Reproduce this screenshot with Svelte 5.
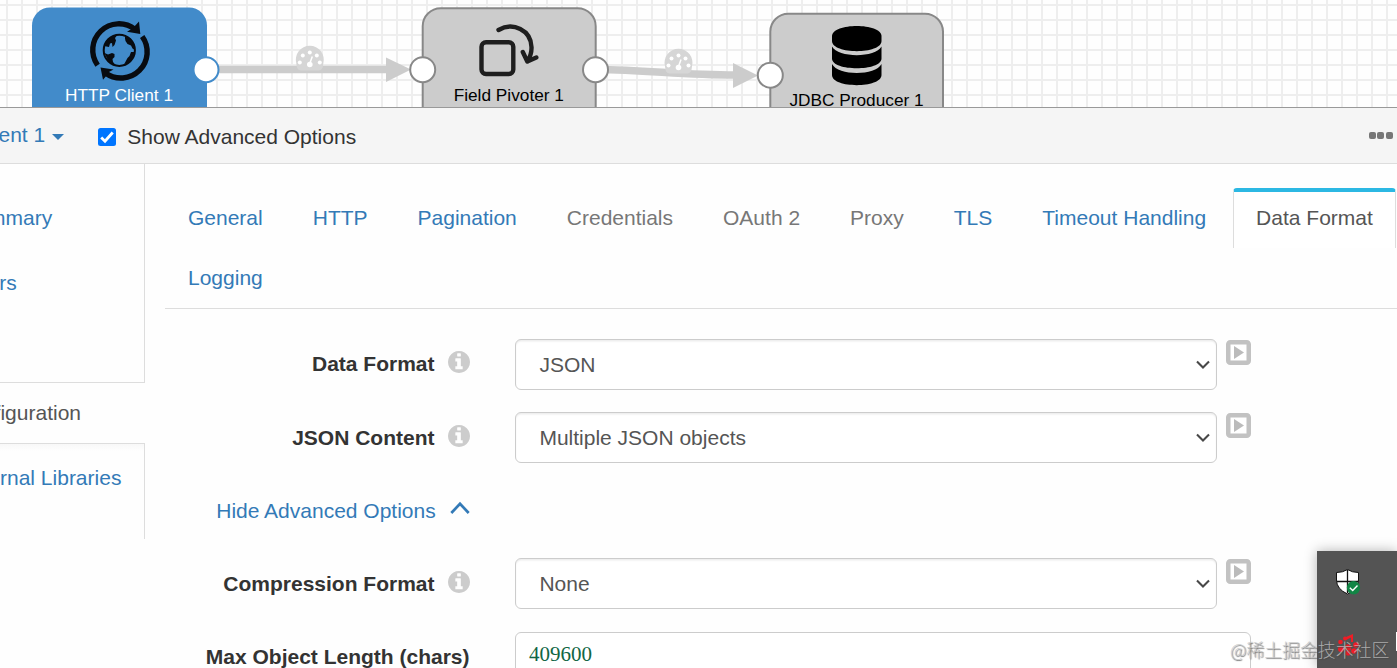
<script>
  const tabs = [
    { name: 'General' },
    { name: 'HTTP' },
    { name: 'Pagination' },
    { name: 'Credentials', off: true },
    { name: 'OAuth 2', off: true },
    { name: 'Proxy', off: true },
    { name: 'TLS' },
    { name: 'Timeout Handling' },
    { name: 'Data Format', active: true },
    { name: 'Logging' }
  ];
</script>

{#snippet gauge()}
  <path d="M-13.5 2 A14 14 0 1 1 13.5 2 Q13 9 9 9 H-9 Q-13 9 -13.5 2Z" fill="#d6d6d6" />
  <g fill="#fff">
    <circle cx="-10" cy="1" r="2" /><circle cx="-7" cy="-6" r="2" /><circle cx="0" cy="-9" r="2" />
    <circle cx="7" cy="-6" r="2" /><circle cx="10" cy="1" r="2" /><circle cx="0" cy="3" r="2.8" />
  </g>
  <path d="M0 2 L2.5 -5" stroke="#fff" stroke-width="1.5" />
{/snippet}

{#snippet field(label, value)}
  <div class="row">
    <div class="label">
      <span>{label}</span>
      <svg class="info" viewBox="128 128 1536 1536"><path d="M1152 1376v-160q0-14-9-23t-23-9h-96v-512q0-14-9-23t-23-9h-320q-14 0-23 9t-9 23v160q0 14 9 23t23 9h96v320h-96q-14 0-23 9t-9 23v160q0 14 9 23t23 9h448q14 0 23-9t9-23zm-128-896v-160q0-14-9-23t-23-9h-192q-14 0-23 9t-9 23v160q0 14 9 23t23 9h192q14 0 23-9t9-23zm640 416q0 209-103 385.5t-279.5 279.5-385.5 103-385.5-103-279.5-279.5-103-385.5 103-385.5 279.5-279.5 385.5-103 385.5 103 279.5 279.5 103 385.5z" /></svg>
    </div>
    <div class="select">
      <span>{value}</span>
      <svg width="14" height="10" viewBox="0 0 14 10"><path d="M1 1.5 L7 7.5 L13 1.5" fill="none" stroke="#484848" stroke-width="2.1" /></svg>
    </div>
    <svg class="play" viewBox="0 0 25 25"><rect x="2.25" y="2.25" width="20.5" height="20.5" rx="2" fill="#fff" stroke="#c2c2c2" stroke-width="4.5" /><path d="M8 6 L18 12.5 L8 19Z" fill="#bbb" /></svg>
  </div>
{/snippet}

<div class="page">
  <div class="canvas">
    <svg width="1397" height="107" font-family="'Liberation Sans', Arial, sans-serif" font-size="17.25">
      <defs>
        <pattern id="grid" width="15" height="15" x="6" y="4" patternUnits="userSpaceOnUse">
          <path d="M1 0 V15 M0 1 H15" stroke="#eee" stroke-width="2" />
        </pattern>
      </defs>
      <rect width="1397" height="107" fill="url(#grid)" />
      <g fill="none" stroke="#ccc" stroke-width="7.5">
        <path d="M206 69.5 H388" />
        <path d="M596 69.5 C650 70 680 75 736 75" />
      </g>
      <path d="M386 57.5 L411 69.5 L386 82Z M733 63 L758 75.5 L733 88Z" fill="#ccc" />
      <g transform="translate(309.8 61.5)">{@render gauge()}</g>
      <g transform="translate(678.5 64.5)">{@render gauge()}</g>

      <rect x="32" y="7.5" width="175" height="140" rx="18" fill="#428bca" />
      <rect x="422.7" y="8.3" width="173" height="140" rx="18" fill="#ccc" stroke="#888" stroke-width="2" />
      <rect x="770.3" y="13.8" width="172.7" height="140" rx="18" fill="#ccc" stroke="#888" stroke-width="2" />
      <g fill="#fff" stroke-width="2">
        <circle cx="206" cy="69.7" r="12.5" stroke="#428bca" />
        <circle cx="422.7" cy="69.7" r="12.5" stroke="#888" />
        <circle cx="595.5" cy="69.7" r="12.5" stroke="#888" />
        <circle cx="770.3" cy="75.2" r="12.5" stroke="#888" />
      </g>

      <g fill="none" stroke="#080b10" stroke-width="5.4">
        <path d="M97.6 65.2 A26.2 26.2 0 0 1 135 29.3" />
        <path d="M142.2 36.5 A26.2 26.2 0 0 1 105.5 73" />
        <circle cx="119.3" cy="50.3" r="15.6" stroke-width="2" />
      </g>
      <g fill="#080b10">
        <path d="M139 21.5 L140.3 34 L127 31.8 L133 28Z" />
        <path d="M100.5 67.5 L113.5 69.5 L108 72.5 L107 75 L103 79.8Z" />
        <path d="M104 46 L107 40 L113 36 L117 35.5 L115 38 L116 40.5 L114.5 45 L112.5 47 L112 43 L110 43.5 L109 47Z" />
        <path d="M104.5 53 L108 54.5 L112 53 L114.5 54 L114.5 57 L112.5 59 L113 62 L116 65.5 L109 62.5Z" />
        <path d="M125 35.5 L130.5 38.5 L134.5 45 L135 50 L132.5 48.5 L131 45.5 L127.5 44 L125.5 41 L125 38.5Z" />
        <path d="M135 52 L133 58 L128.5 62.5 L124 64.5 L127.5 58 L129.5 56 L131 52Z" />
      </g>

      <g fill="none" stroke="#1e1e1e" stroke-width="4.4" stroke-linecap="round" stroke-linejoin="round">
        <rect x="481.5" y="42.2" width="31.8" height="31.8" rx="4.5" />
        <path d="M498.5 30 C513 21.5 531 30 531.5 47 Q531.8 54 527.5 61.5 M522.8 52 L527.3 61.5 L536.3 57.5" />
      </g>

      <g fill="#000">
        <path d="M832 36 C832 22.5 881.5 22.5 881.5 36 V41 C881.5 54.5 832 54.5 832 41Z" />
        <path d="M832 46.5 C838 58 875.5 58 881.5 46.5 V58.5 C881.5 71.5 832 71.5 832 58.5Z" />
        <path d="M832 64 C838 76 875.5 76 881.5 64 V75 C881.5 88.5 832 88.5 832 75Z" />
      </g>

      <g text-anchor="middle">
        <text x="119" y="101" fill="#fff">HTTP Client 1</text>
        <text x="508.8" y="101">Field Pivoter 1</text>
        <text x="856.5" y="106">JDBC Producer 1</text>
      </g>
    </svg>
  </div>

  <header>
    <span class="stage">ent 1</span>
    <span class="caret"></span>
    <svg class="check" width="18" height="18" viewBox="0 0 18 18"><rect width="18" height="18" rx="2.5" fill="#0075ff" /><path d="M3.2 9.5 L7 13.2 L14.7 4.5" fill="none" stroke="#fff" stroke-width="2.8" /></svg>
    <span class="show">Show Advanced Options</span>
    <span class="more"><i></i><i></i><i></i></span>
  </header>

  <div class="body">
    <nav class="side">
      <div class="group top">
        <a class="summary">mmary</a>
        <a class="errors">rs</a>
      </div>
      <a class="current">figuration</a>
      <div class="group bottom"><a>rnal Libraries</a></div>
    </nav>

    <main>
      <div class="tabs">
        {#each tabs as tab}
          <a class="tab" class:off={tab.off} class:active={tab.active}>{tab.name}</a>
        {/each}
      </div>
      <div class="form">
        {@render field('Data Format', 'JSON')}
        {@render field('JSON Content', 'Multiple JSON objects')}
        <div class="row toggle">
          <a>Hide Advanced Options</a>
          <svg width="20" height="14" viewBox="0 0 20 14"><path d="M1.3 12 L10 2.8 L18.7 12" fill="none" stroke="#337ab7" stroke-width="2.7" /></svg>
        </div>
        {@render field('Compression Format', 'None')}
        <div class="row last">
          <div class="label"><span>Max Object Length (chars)</span></div>
          <div class="number">409600</div>
        </div>
      </div>
    </main>
  </div>

  <div class="tray">
    <svg width="80" height="117" viewBox="0 0 80 117">
      <path d="M19.5 21.5 Q26 21.5 30.5 18.5 Q35 21.5 41.5 21.5 V29 Q41.5 38 30.5 43 Q19.5 38 19.5 29Z" fill="#fff" stroke="#111" />
      <path d="M30.5 19 V42 M20 30.5 H41" stroke="#111" stroke-width="1.3" />
      <circle cx="36.5" cy="36.8" r="6.7" fill="#118545" />
      <path d="M32.8 36.8 L35.7 39.5 L40.5 34.5" fill="none" stroke="#fff" stroke-width="1.4" />
      <g fill="#ef1c25">
        <circle cx="23.5" cy="91" r="2.3" /><circle cx="28" cy="87.5" r="2" /><circle cx="39" cy="94" r="2.8" />
        <circle cx="24" cy="98" r="3" /><circle cx="31" cy="96.5" r="3.2" /><circle cx="31" cy="102" r="2.6" /><circle cx="37" cy="100" r="2.8" />
        <path d="M29 89 V86 L36 83 V91 H34 V86.5Z" />
      </g>
      <rect x="79" y="81" width="1" height="19" fill="#fff" />
    </svg>
  </div>
  <div class="mark">@稀土掘金技术社区</div>
</div>

<style>
  :global(body) { margin: 0; background: #fff; }
  .page {
    position: relative; width: 1397px; height: 668px; overflow: hidden;
    display: flex; flex-direction: column; background: #fefefe;
    font: 21px/30px 'Liberation Sans', Arial, sans-serif; color: #333;
  }
  .page * { box-sizing: border-box; }
  .canvas { height: 107px; flex: none; }
  .canvas svg { display: block; }
  a { color: #337ab7; text-decoration: none; white-space: nowrap; }
  header {
    height: 57px; flex: none; display: flex; align-items: center;
    background: #f5f5f5; border-top: 1px solid #999; border-bottom: 1px solid #ddd;
  }
  .stage { margin-left: -1.5px; margin-top: -2px; color: #337ab7; white-space: nowrap; }
  .caret { margin: 2px 0 0 6.5px; border: 6px solid transparent; border-top-color: #337ab7; border-bottom: 0; }
  .check { margin-left: 34px; margin-top: 2px; flex: none; }
  .show { margin: 2px 0 0 11.6px; }
  .more { margin-left: auto; padding-right: 4.5px; display: flex; gap: 1.3px; }
  .more i { width: 7px; height: 7px; border-radius: 2px; background: #777; }
  .body { flex: 1; min-height: 0; display: flex; }
  .side { width: 145px; height: 375px; flex: none; display: flex; flex-direction: column; overflow: hidden; }
  .group { border-right: 1px solid #ddd; display: flex; flex-direction: column; }
  .top { height: 219px; padding-top: 39px; gap: 35px; border-bottom: 1px solid #ddd; }
  .summary { margin-left: -12px; }
  .errors { margin-left: -0.8px; }
  .current { height: 60px; padding-top: 15px; margin-left: -5.4px; color: #555; }
  .bottom { height: 96px; padding-top: 19px; border-top: 1px solid #ddd; background: linear-gradient(#f8f8f8, #fefefe 7px); }
  main { flex: 1; min-width: 0; padding-left: 20px; }
  .tabs { height: 145px; padding-top: 24px; display: flex; flex-wrap: wrap; align-content: flex-start; border-bottom: 1px solid #ddd; }
  .tab { height: 60px; padding: 15px 23px 15px 22px; border: 0 solid transparent; border-width: 0 1px; margin-right: 3px; }
  .off { color: #777; }
  .active {
    margin-right: 0; padding: 11px 22px; color: #555; background: #fff;
    border-color: #ddd; border-top: 4px solid #2cb8e3; border-radius: 4px 4px 0 0;
  }
  .form { display: flex; flex-direction: column; gap: 22px; padding-top: 30px; }
  .row { height: 51px; display: flex; flex: none; }
  .last { margin-top: 1px; }
  .label { width: 305px; display: flex; justify-content: flex-end; padding-top: 11px; margin-right: 45px; font-weight: 700; white-space: nowrap; }
  .row:first-child .label, .last .label { padding-top: 10px; }
  .last .label { width: 304.5px; margin-right: 45.5px; }
  .info { width: 22px; height: 22px; margin: 2px 0 0 13.5px; fill: #ccc; flex: none; }
  .select {
    width: 702px; height: 51px; padding: 0 6px 0 23.4px; display: flex; align-items: center; justify-content: space-between;
    border: 1px solid #ccc; border-radius: 6px; background: #fff; color: #555; box-shadow: inset 0 1.5px 1.5px rgba(0, 0, 0, 0.075);
  }
  .play { width: 25px; height: 25px; margin: 1px 0 0 9px; }
  .toggle { width: 304.6px; justify-content: flex-end; padding-top: 11px; gap: 13.9px; }
  .toggle svg { margin-top: 4.5px; }
  .number {
    width: 736px; height: 51px; padding: 6px 13px; border: 1px solid #ccc; border-radius: 6px; background: #fff;
    color: #164; font-family: 'Liberation Serif', serif;
  }
  .tray { position: absolute; left: 1317px; top: 551px; width: 80px; height: 117px; background: #545454; box-shadow: 0 0 12px rgba(0, 0, 0, 0.3); }
  .tray svg { display: block; }
  .mark {
    position: absolute; left: 1230px; top: 634px; white-space: nowrap;
    font: 300 17.9px/30px 'Noto Sans CJK SC', sans-serif; color: rgba(195, 195, 195, 0.8);
    text-shadow: 1px 1px 1px rgba(70, 70, 70, 0.75);
  }
</style>
